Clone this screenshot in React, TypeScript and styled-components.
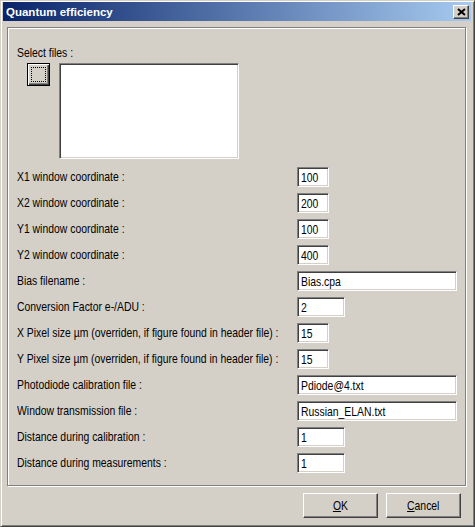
import React from 'react';
import styled, { createGlobalStyle } from 'styled-components';

const face = '#d4d0c8';
const shadow = '#808080';
const darkShadow = '#404040';

const GlobalStyle = createGlobalStyle`
  html, body {
    margin: 0;
    padding: 0;
    background: ${face};
  }
  * {
    box-sizing: border-box;
  }
`;

const Window = styled.div`
  width: 475px;
  height: 527px;
  background: ${face};
  border-top: 1px solid ${face};
  border-left: 1px solid ${face};
  border-right: 1px solid ${darkShadow};
  border-bottom: 1px solid ${darkShadow};
  box-shadow: inset 1px 1px 0 #fff, inset -1px -1px 0 ${shadow};
  padding: 1px 3px 3px 1px;
  display: flex;
  flex-direction: column;
  font-family: 'Liberation Sans', Arial, sans-serif;
  font-size: 13px;
  color: #000;
`;

const TitleBar = styled.div`
  height: 19px;
  margin-left: 1px;
  background: linear-gradient(to right, #0a246a, #a6caf0);
  display: flex;
  align-items: center;
  justify-content: space-between;
  padding: 0 2px 0 3px;
`;

const Title = styled.span`
  font-weight: bold;
  font-size: 11.5px;
  color: #fff;
`;

const CloseButton = styled.button`
  width: 16px;
  height: 14px;
  padding: 0;
  background: ${face};
  border-top: 1px solid #fff;
  border-left: 1px solid #fff;
  border-right: 1px solid ${darkShadow};
  border-bottom: 1px solid ${darkShadow};
  box-shadow: inset -1px -1px 0 ${shadow};
  display: flex;
  align-items: center;
  justify-content: center;
  svg {
    display: block;
  }
`;

const Body = styled.div`
  flex: 1;
  display: flex;
  flex-direction: column;
  padding: 6px 5px 0 5px;
`;

const GroupBox = styled.div`
  height: 459px;
  border: 1px solid ${shadow};
  box-shadow: inset 1px 1px 0 #fff, 1px 1px 0 #fff;
  padding: 17px 9px 0 9px;
  display: flex;
  flex-direction: column;
`;

/* the dialog font is a narrow sans; squeeze Liberation Sans to its width */
const Narrow = styled.span<{ $origin?: string }>`
  display: inline-block;
  white-space: nowrap;
  transform: scaleX(0.8);
  transform-origin: ${({ $origin }) => $origin ?? 'left'} center;
`;

const Label = styled.div`
  line-height: 16px;
  white-space: nowrap;
`;

const FileRow = styled.div`
  display: flex;
  align-items: flex-start;
  gap: 9px;
  margin: 2px 0 0 10px;
`;

const BrowseButton = styled.button`
  width: 23px;
  height: 23px;
  padding: 3px;
  background: ${face};
  border: 1px solid #000;
  box-shadow: inset 1px 1px 0 #fff, inset -1px -1px 0 ${darkShadow}, inset -2px -2px 0 ${shadow};
  display: flex;
`;

const FocusRect = styled.span`
  flex: 1;
  border: 1px dotted #000;
`;

const ListBox = styled.div`
  width: 180px;
  height: 96px;
  background: #fff;
  border-top: 1px solid ${shadow};
  border-left: 1px solid ${shadow};
  border-right: 1px solid #fff;
  border-bottom: 1px solid #fff;
  box-shadow: inset 1px 1px 0 ${darkShadow}, inset -1px -1px 0 ${face};
`;

const Fields = styled.div`
  display: flex;
  flex-direction: column;
  gap: 6px;
  margin-top: 8px;
`;

const FieldRow = styled.div`
  display: grid;
  grid-template-columns: 280px 1fr;
  align-items: center;
`;

const TextBox = styled.div<{ $width: number }>`
  width: ${({ $width }) => $width}px;
  height: 20px;
  background: #fff;
  border-top: 1px solid ${shadow};
  border-left: 1px solid ${shadow};
  border-right: 1px solid #fff;
  border-bottom: 1px solid #fff;
  box-shadow: inset 1px 1px 0 ${darkShadow}, inset -1px -1px 0 ${face};
  padding: 2px 0 0 3px;
  line-height: 15px;
  white-space: nowrap;
  overflow: hidden;
`;

const Footer = styled.div`
  display: flex;
  justify-content: flex-end;
  gap: 8px;
  padding: 7px 5px 0 0;
`;

const PushButton = styled.button`
  width: 75px;
  height: 25px;
  padding: 0;
  background: ${face};
  font: inherit;
  color: #000;
  border-top: 1px solid #fff;
  border-left: 1px solid #fff;
  border-right: 1px solid ${darkShadow};
  border-bottom: 1px solid ${darkShadow};
  box-shadow: inset -1px -1px 0 ${shadow};
  u {
    text-decoration: underline;
  }
`;

type Field = { label: string; value: string; width: number };

const fields: Field[] = [
  { label: 'X1 window coordinate :', value: '100', width: 32 },
  { label: 'X2 window coordinate :', value: '200', width: 32 },
  { label: 'Y1 window coordinate :', value: '100', width: 32 },
  { label: 'Y2 window coordinate :', value: '400', width: 32 },
  { label: 'Bias filename :', value: 'Bias.cpa', width: 160 },
  { label: 'Conversion Factor e-/ADU :', value: '2', width: 48 },
  { label: 'X Pixel size µm (overriden, if figure found in header file) :', value: '15', width: 32 },
  { label: 'Y Pixel size µm (overriden, if figure found in header file) :', value: '15', width: 32 },
  { label: 'Photodiode calibration file :', value: 'Pdiode@4.txt', width: 160 },
  { label: 'Window transmission file :', value: 'Russian_ELAN.txt', width: 160 },
  { label: 'Distance during calibration :', value: '1', width: 48 },
  { label: 'Distance during measurements :', value: '1', width: 48 },
];

const App: React.FC = () => {
  return (
    <>
      <GlobalStyle />
      <Window>
        <TitleBar>
          <Title>Quantum efficiency</Title>
          <CloseButton aria-label='Close'>
            <svg width='9' height='8' viewBox='0 0 9 8'>
              <path d='M1 1l7 6M8 1L1 7' stroke='#000' strokeWidth='2' fill='none' />
            </svg>
          </CloseButton>
        </TitleBar>
        <Body>
          <GroupBox>
            <Label>
              <Narrow>Select files :</Narrow>
            </Label>
            <FileRow>
              <BrowseButton aria-label='Browse'>
                <FocusRect />
              </BrowseButton>
              <ListBox />
            </FileRow>
            <Fields>
              {fields.map((f) => (
                <FieldRow key={f.label}>
                  <Label>
                    <Narrow>{f.label}</Narrow>
                  </Label>
                  <TextBox $width={f.width}>
                    <Narrow>{f.value}</Narrow>
                  </TextBox>
                </FieldRow>
              ))}
            </Fields>
          </GroupBox>
          <Footer>
            <PushButton>
              <Narrow $origin='center'>
                <u>O</u>K
              </Narrow>
            </PushButton>
            <PushButton>
              <Narrow $origin='center'>
                <u>C</u>ancel
              </Narrow>
            </PushButton>
          </Footer>
        </Body>
      </Window>
    </>
  );
};

export default App;
